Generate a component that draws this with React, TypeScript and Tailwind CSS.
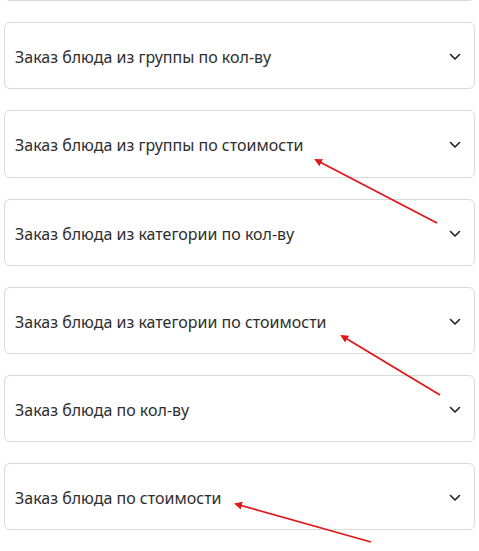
import React from 'react';

const items = [
  '',
  'Заказ блюда из группы по кол-ву',
  'Заказ блюда из группы по стоимости',
  'Заказ блюда из категории по кол-ву',
  'Заказ блюда из категории по стоимости',
  'Заказ блюда по кол-ву',
  'Заказ блюда по стоимости',
];

const Chevron = () => (
  <svg width="12" height="8" viewBox="0 0 12 8" fill="none" className="mt-[3px] shrink-0">
    <path d="M1.5 1.5L6 6L10.5 1.5" stroke="#1f1f1f" strokeWidth="1.6" strokeLinecap="round" strokeLinejoin="round" />
  </svg>
);

// red annotation arrows: [tailX, tailY, tipX, tipY]
const arrows = [
  [437, 223, 316, 160],
  [440, 395, 342, 336],
  [371, 542, 236, 504],
];

export default function App() {
  return (
    <div className="relative h-[551px] w-[479px] overflow-hidden bg-white" style={{ fontFamily: '"Noto Sans", sans-serif' }}>
      <div className="-mt-[66px] flex flex-col gap-[21px] px-[4px]">
        {items.map((label, i) => (
          <div
            key={i}
            className="flex h-[67.2px] items-center justify-between rounded-[6px] border border-[#d9d9d9] bg-white pl-[10px] pr-[13px]"
          >
            <span className="pt-[3px] text-[16px] text-[#2e2e2e]">{label}</span>
            <Chevron />
          </div>
        ))}
      </div>

      <svg className="pointer-events-none absolute left-0 top-0" width="479" height="551">
        <defs>
          <marker id="head" markerWidth="8" markerHeight="8" refX="6" refY="4" orient="auto" markerUnits="userSpaceOnUse">
            <path d="M0 0L8 4L0 8Z" fill="#e01818" />
          </marker>
        </defs>
        {arrows.map(([x1, y1, x2, y2], i) => (
          <line key={i} x1={x1} y1={y1} x2={x2} y2={y2} stroke="#e01818" strokeWidth="1.8" markerEnd="url(#head)" />
        ))}
      </svg>
    </div>
  );
}
